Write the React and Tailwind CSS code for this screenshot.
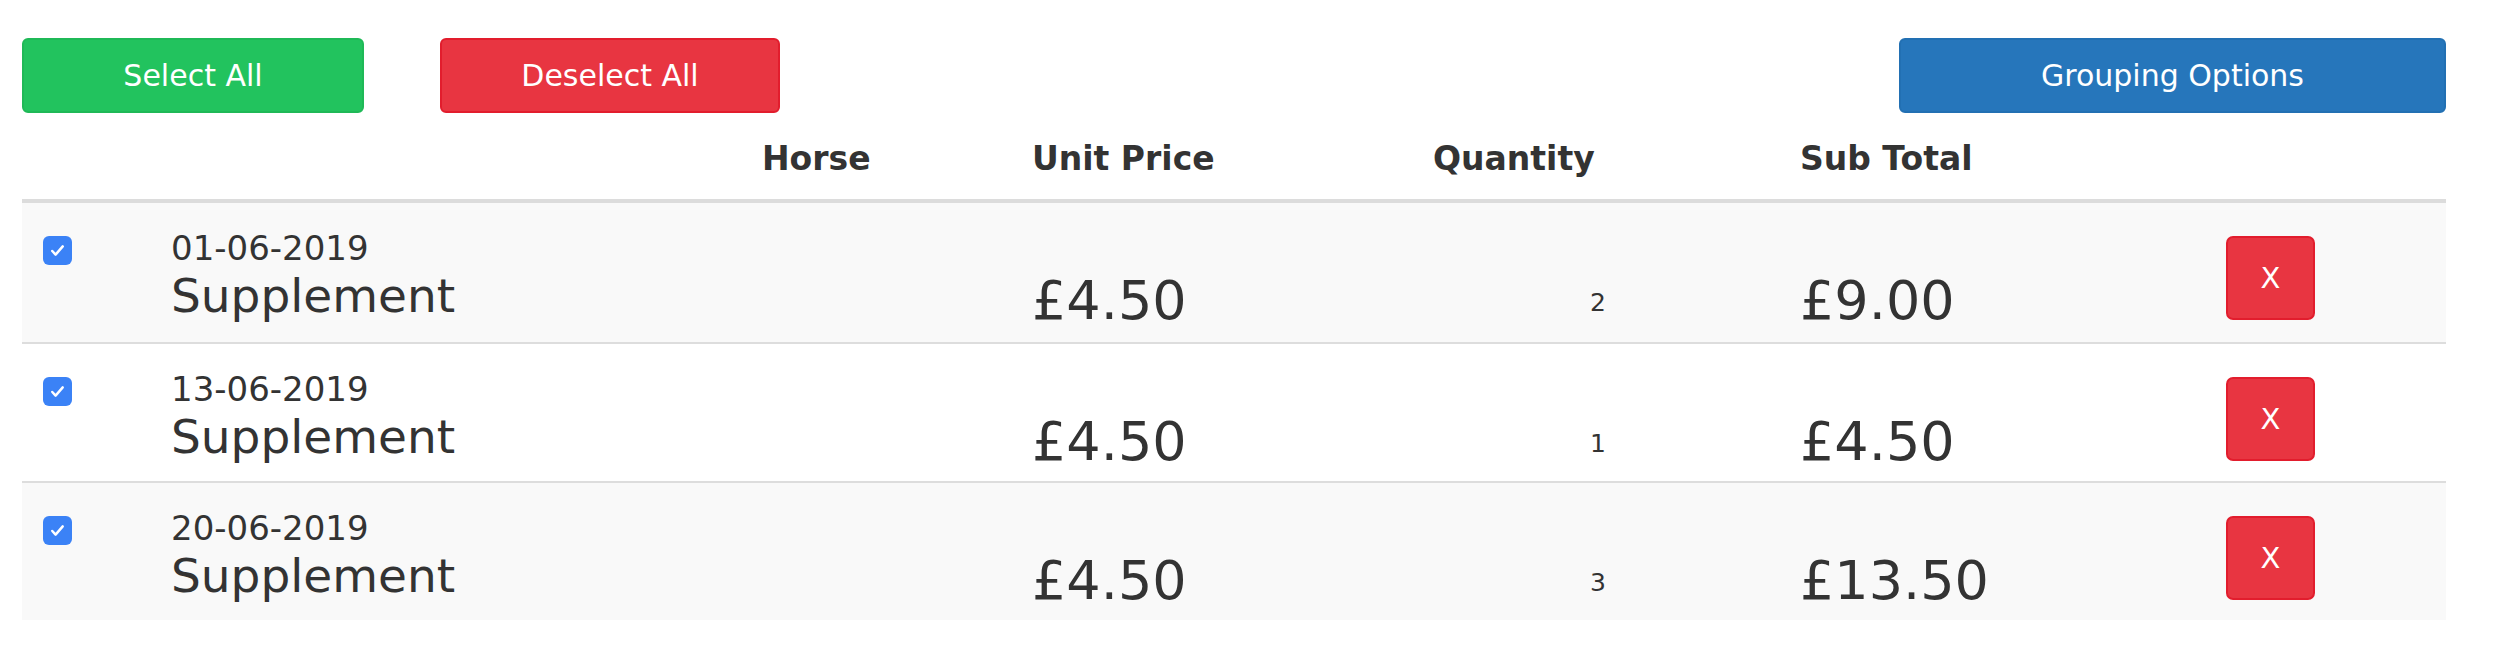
import React from "react";

const rows = [
  { date: "01-06-2019", name: "Supplement", price: "£4.50", qty: "2", sub: "£9.00", striped: true },
  { date: "13-06-2019", name: "Supplement", price: "£4.50", qty: "1", sub: "£4.50", striped: false },
  { date: "20-06-2019", name: "Supplement", price: "£4.50", qty: "3", sub: "£13.50", striped: true },
];

function Check() {
  return (
    <div className="w-[29px] h-[29px] rounded-[6px] bg-[#3b82f6] flex items-center justify-center">
      <svg width="19" height="19" viewBox="0 0 20 20" fill="none">
        <path d="M4.5 10.5l3.5 3.8 7.5-8.6" stroke="#ffffff" strokeWidth="2.6" strokeLinecap="round" strokeLinejoin="round" />
      </svg>
    </div>
  );
}

export default function App() {
  return (
    <div className="w-[2500px] h-[667px] bg-white text-[#333333]" style={{ fontFamily: '"DejaVu Sans", Verdana, sans-serif' }}>
      <div className="ml-[22px] w-[2424px] pt-[38px]">
        <div className="flex items-center h-[75px]">
          <button className="w-[342px] h-[75px] rounded-[6px] bg-[#22c35e] border-2 border-[#1fb957] text-white text-[30px] leading-none">
            Select All
          </button>
          <button className="ml-[76px] w-[340px] h-[75px] rounded-[6px] bg-[#e83541] border-2 border-[#e21d2d] text-white text-[30px] leading-none">
            Deselect All
          </button>
          <div className="flex-1" />
          <button className="w-[547px] h-[75px] rounded-[6px] bg-[#2676bb] border-2 border-[#2270b3] text-white text-[30px] leading-none">
            Grouping Options
          </button>
        </div>

        <div className="grid grid-cols-[149px_591px_270px_401px_367px_426px_220px] pt-[29px] pb-[24px] border-b-4 border-[#dcdcdc] text-[33px] leading-[33px] font-bold">
          <div></div>
          <div></div>
          <div>Horse</div>
          <div>Unit Price</div>
          <div>Quantity</div>
          <div>Sub Total</div>
          <div></div>
        </div>

        {rows.map((r, i) => (
          <div
            key={i}
            className={
              "grid grid-cols-[149px_591px_270px_401px_367px_426px_220px] items-start h-[139px] " +
              (i > 0 ? "border-t-2 border-[#dddddd] " : "") +
              (r.striped ? "bg-[#f9f9f9]" : "bg-white")
            }
          >
            <div className="pt-[33px] pl-[21px]">
              <Check />
            </div>
            <div className="pt-[28px]">
              <div className="text-[34px] leading-[34px]">{r.date}</div>
              <div className="mt-[7px] text-[47px] leading-[47px]">{r.name}</div>
            </div>
            <div></div>
            <div className="pt-[71px] text-[54px] leading-[54px]">{r.price}</div>
            <div className="pt-[87px] pl-[157px] text-[25px] leading-[25px]">{r.qty}</div>
            <div className="pt-[71px] text-[54px] leading-[54px]">{r.sub}</div>
            <div className="pt-[33px]">
              <button className="w-[89px] h-[84px] rounded-[7px] bg-[#e83541] border-2 border-[#e21d2d] text-white text-[29px] leading-none">
                X
              </button>
            </div>
          </div>
        ))}
      </div>
    </div>
  );
}
